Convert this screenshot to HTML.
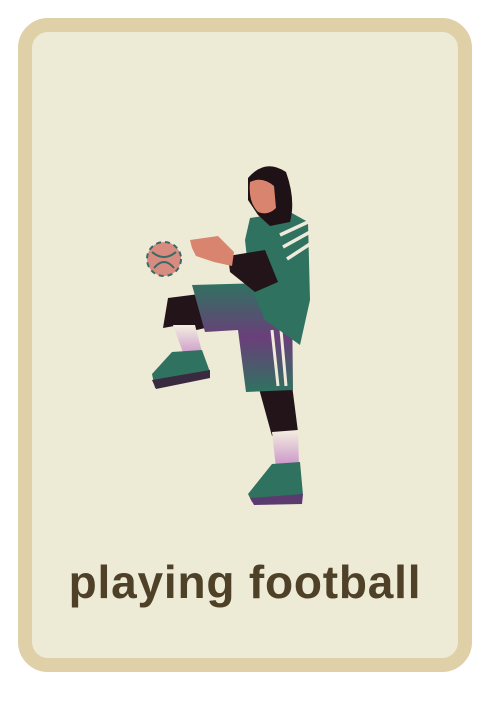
<!DOCTYPE html>
<html><head><style>
html,body{margin:0;padding:0;background:#fff;}
.card{position:absolute;left:18px;top:18px;width:426px;height:626px;border:14px solid #dfd0a8;border-radius:30px;background:#edead6;}
.t{position:absolute;left:0;width:490px;top:555px;text-align:center;font:bold 46px "Liberation Sans",sans-serif;color:#4f4128;letter-spacing:0.8px;}
svg{position:absolute;left:0;top:0;}
</style></head><body>
<div class="card"></div>
<svg width="500" height="707" viewBox="0 0 500 707">
<defs>
<linearGradient id="g1" x1="0" y1="0" x2="0" y2="1"><stop offset="0" stop-color="#2f7260"/><stop offset="0.5" stop-color="#6a3f7a"/><stop offset="1" stop-color="#2f7260"/></linearGradient>
<linearGradient id="s1" x1="0" y1="0" x2="0" y2="1"><stop offset="0" stop-color="#f3efe0"/><stop offset="1" stop-color="#c98fc8"/></linearGradient>
</defs>
<path d="M258 385 L292 385 L298 432 L272 436 Z" fill="#231419"/>
<path d="M272 432 L298 430 L299 468 L276 468 Z" fill="url(#s1)"/>
<path d="M272 464 L300 462 L303 495 L290 500 L252 502 L248 494 Z" fill="#2f7260"/>
<path d="M250 498 L303 494 L302 504 L254 505 Z" fill="#5b3a70"/>
<path d="M168 298 L215 292 L218 325 L188 332 L180 325 L163 328 Z" fill="#231419"/>
<path d="M173 325 L195 325 L202 352 L185 358 Z" fill="url(#s1)"/>
<path d="M172 352 L202 350 L210 372 L190 380 L155 388 L152 374 Z" fill="#2f7260"/>
<path d="M152 380 L210 370 L210 378 L156 389 Z" fill="#3a2a40"/>
<path d="M192 285 L262 283 L292 300 L293 390 L246 392 L238 330 L205 332 Z" fill="url(#g1)"/>
<path d="M272 330 L278 386 M281 330 L286 386" stroke="#efeadb" stroke-width="3"/>
<path d="M250 218 L290 212 L308 222 L310 300 L300 345 L265 320 L250 285 L245 240 Z" fill="#2f7260"/>
<path d="M280 235 L308 222 M283 247 L310 232 M287 259 L310 244" stroke="#efeadb" stroke-width="3.5"/>
<path d="M228 256 L265 250 L278 282 L255 292 L230 272 Z" fill="#231419"/>
<path d="M190 240 L218 236 L234 252 L232 266 L214 262 L196 256 L192 248 Z" fill="#d9846e"/>
<path d="M248 178 Q265 158 286 172 Q296 200 290 222 L270 226 L258 215 L248 200 Z" fill="#1e1216"/>
<path d="M250 182 Q262 176 274 186 L276 208 Q268 216 258 212 Q248 202 250 182 Z" fill="#d9846e"/>
<circle cx="164" cy="259" r="17" fill="#d88c80"/>
<circle cx="164" cy="259" r="17" fill="none" stroke="#3b6a66" stroke-width="2" stroke-dasharray="5 4"/>
<path d="M152 252 Q164 262 176 252 M154 268 Q164 256 174 268" stroke="#3b6a66" stroke-width="2" fill="none"/>
</svg>
<div class="t">playing football</div>
</body></html>
